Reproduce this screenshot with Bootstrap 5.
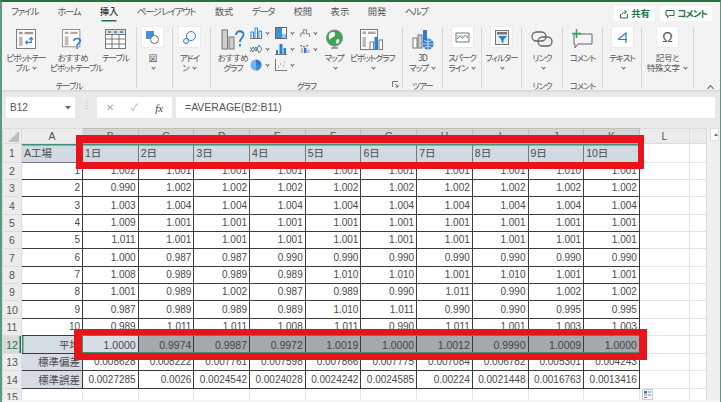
<!DOCTYPE html>
<html lang="ja"><head><meta charset="utf-8">
<link href="https://cdn.jsdelivr.net/npm/bootstrap@5.3.0/dist/css/bootstrap.min.css" rel="stylesheet">
<style>
html,body{margin:0;background:#fff;overflow:hidden}
body{width:721px;height:402px;font-family:"Liberation Sans","Noto Sans CJK JP",sans-serif}
.xl-app{width:721px;height:402px;border-left:2px solid #5d9a7d;border-right:1px solid #5d9a7d;border-top:2px solid #217346;background:#f3f3f3;overflow:hidden;position:relative}
.xl-jp{font-family:"Noto Sans CJK JP",sans-serif;font-feature-settings:"palt";color:#555}
.xl-tabs{height:20px;font-size:9.3px;padding:3px 0 0 9px;gap:18.5px;line-height:13px;flex-wrap:nowrap;position:relative}
.xl-tabs .xl-on{color:#333;font-weight:500;box-shadow:0 3px 0 -1.5px #217346;height:15px}
.xl-kn{letter-spacing:-1.3px;margin-right:1px}
.xl-share{position:absolute;top:4px;height:15px;background:#fff;color:#217346;font-size:9.3px;font-weight:700;line-height:15px;text-align:center}
.xl-s1{left:612px;width:41px}.xl-s2{left:658px;width:52px}
.xl-s2 span{letter-spacing:-1px}
.xl-ribbon{height:68px;background:#f3f3f3}
.xl-grp{margin-top:5px;height:61px;border-right:1.5px solid #d6d6d6;flex:none;position:relative}
.xl-g1{width:135px}.xl-g2{width:36px}.xl-g3{width:38px}.xl-g4{width:192px}.xl-g5{width:40px}.xl-g6{width:39px}.xl-g7{width:40px}.xl-g8{width:41px}.xl-g9{width:40px}.xl-g10{width:39px}.xl-g11{width:52px}
.xl-btn{flex:none;text-align:center;font-size:8.5px;line-height:10px;white-space:nowrap;letter-spacing:-1px}
.xl-kj{letter-spacing:-.3px}
.xl-ico{height:25px;display:flex;justify-content:center;align-items:flex-start}
.xl-ico>svg{margin-top:2px}
.xl-w48{width:48px}.xl-w46{width:46px}.xl-w39{width:39px}.xl-w42{width:42px;margin-left:1px}.xl-w68{width:68px}.xl-w32{width:32px}.xl-w44{width:44px}
.xl-box{width:21px;height:20px;background:#fff;display:flex;align-items:center;justify-content:center;box-shadow:0 0 0 .5px #e4e4e4}
.xl-om{font-family:"Liberation Sans",sans-serif;font-size:14px;line-height:20px;color:#555;letter-spacing:0}
.xl-car{display:inline-block;width:3px;height:3px;border-right:1px solid #666;border-bottom:1px solid #666;transform:rotate(45deg);margin:0 1px 2px 3px}
.xl-title{position:absolute;left:0;right:0;bottom:-2px;text-align:center;font-size:8.5px;line-height:10px;letter-spacing:-1px}
.xl-mini{display:grid;grid-template-columns:25px 25px 18px;grid-auto-rows:16px;margin:-2px 0 0 -4px}
.xl-mini>div{display:flex;align-items:center;gap:1px}
.xl-launch{position:absolute;right:3px;bottom:0}
.xl-up{position:absolute;right:7px;top:84px;width:5px;height:5px;border-left:1px solid #666;border-top:1px solid #666;transform:rotate(45deg)}
.xl-fbar{height:38px;background:#e9e9e9;padding:7px 0 8px 4px;box-shadow:inset 0 3px 3px -2px #cfcfcf}
.xl-name{width:69px;height:21px;background:#fff;font-size:10px;color:#555;padding:0 4px;line-height:21px}
.xl-dots{width:22px;color:#aaa;font-size:9px;line-height:19px;text-align:center}
.xl-fx{width:75px;height:21px;background:#fff;margin-right:4px;color:#aaa;font-size:10px;line-height:20px}
.xl-fxi{font-family:"Liberation Serif",serif;font-style:italic;color:#444;font-size:11px}
.xl-formula{width:539px;height:21px;background:#fff;font-size:10.5px;line-height:21px;color:#555;padding-left:9px}
.xl-area{display:flex;background:#fff;height:272px}
.xl-sheet{width:704px;flex:none;background:#fff;overflow:hidden;position:relative}
.xl-scroll{width:15px;flex:none;background:#f0f0f0;padding:0 2px 0 3px;border-left:1px solid #ddd}
.xl-scroll-b{height:13px;background:#fff;border:1px solid #ddd;position:relative}
.xl-scroll-b::after{content:"";position:absolute;left:3px;top:4px;border:2.5px solid transparent;border-bottom:3px solid #777;border-top:0}
.xl-grid.table{table-layout:fixed;width:704px;border-collapse:collapse;margin:0;font-size:10px;color:#4a4a4a;--bs-table-bg:transparent}
.xl-grid.table>:not(caption)>*>*{padding:0 2px 0 0;height:17px;line-height:16px;border:1px solid #3b3b3b;text-align:right;overflow:hidden;white-space:nowrap;background:#fff;color:#4a4a4a;font-weight:400;box-shadow:none;vertical-align:middle}
.xl-grid.table>:not(caption)>*>*:nth-child(1){width:19px}
.xl-grid.table>:not(caption)>*>*:nth-child(2){width:61px}
.xl-grid.table>:not(caption)>*>*:nth-child(n+3){width:55.7px}
.xl-grid.table>:not(caption)>*>*:nth-child(13){width:50px}
.xl-grid.table>:not(caption)>*>*:nth-child(14){width:16.7px}
.xl-grid.table>:not(caption)>*>.xl-rh{background:#ececec;border:1px solid #dcdcdc;text-align:center;font-size:10.5px;color:#555;padding:0}
.xl-grid.table>:not(caption)>*>.xl-ch{background:#d4d4d4;border:1px solid #bdbdbd;border-bottom:1px solid #aaa;text-align:center;height:15px;line-height:14px;font-size:10.5px;color:#555;padding:0}
.xl-grid.table>:not(caption)>*>.xl-cl{background:#ececec;border-color:#dcdcdc}
.xl-grid.table>:not(caption)>*>.xl-e{border:1px solid #e4e4e4}
.xl-grid.table>:not(caption)>*>.xl-a{border-left-color:#e4e4e4;border-top-color:#bbb}
.xl-grid.table>:not(caption)>*>.xl-hd{background:#d1d9e2;text-align:left;padding-left:2px;border-color:#778;height:19px;line-height:18px;font-size:10.5px}
.xl-hdr-row>.xl-hd{box-shadow:inset 0 1.5px 0 #3f8f73 !important}
.xl-grid.table>:not(caption)>*>.xl-lab{background:#d6dce4;font-family:"Noto Sans CJK JP",sans-serif;font-size:10.5px;letter-spacing:0;border-left-color:#888}
.xl-grid.table>:not(caption)>*>.xl-dk{background:#a5a8ac;color:#444;font-size:10.5px}
.xl-grid.table>:not(caption)>*>.xl-lt{background:#d6dde5;font-size:10.5px}
.xl-grid.table>:not(caption)>*>.xl-sel{background:#d9d9d9;color:#217346;box-shadow:inset -1.5px 0 0 #217346}
.xl-grid.table>:not(caption)>*>.xl-lsel{background:#d6dce4;box-shadow:inset 1.5px 0 0 #3f8f73}
.xl-tall>*{height:18px !important}
.xl-hi{position:absolute;border-style:solid;border-color:#e8141c;pointer-events:none}
.xl-hi1{left:74px;top:7px;width:568px;height:34px;border-width:8px 6px 7px 7px}
.xl-hi2{left:72px;top:201px;width:573px;height:31px;border-width:6px 8px 7px 8px}
.xl-outl{position:absolute;left:80px;top:207px;width:558px;height:18px;border:1px solid #3f8f73;pointer-events:none}
.xl-tri{position:absolute;left:5px;top:2px}
.xl-paste{position:absolute;left:640px;top:261px}
</style></head><body>
<div class="xl-app d-flex flex-column">
 <ul class="nav xl-tabs xl-jp">
  <li class="xl-kn">ファイル</li><li class="xl-kn">ホーム</li><li class="xl-on">挿入</li><li class="xl-kn">ページ レイアウト</li><li>数式</li><li class="xl-kn">データ</li><li>校閲</li><li>表示</li><li>開発</li><li class="xl-kn">ヘルプ</li>
  <li class="xl-share xl-s1">
   <svg width="10" height="10" viewBox="0 0 10 10" fill="none" stroke="#217346"><path d="M1.5 5v4h7V5M3 5.500c.5-2 2-2.500 4-2.500M5.500 1 7.500 3 5.500 5"/></svg> 共有</li>
  <li class="xl-share xl-s2"><svg width="10" height="10" viewBox="0 0 10 10" fill="none" stroke="#217346"><path d="M1 1.500h8v5H4L2.500 8.500v-2H1z"/></svg> <span>コメント</span></li>
 </ul>
 <div class="xl-ribbon d-flex xl-jp">
  <div class="xl-grp xl-g1"><div class="d-flex">
   <div class="xl-btn xl-w48"><div class="xl-ico"><svg width="20" height="20" viewBox="0 0 21 21"><rect x=".5" y=".5" width="20" height="20" fill="#fff" stroke="#777"/><rect x="3" y="3" width="4" height="2.500" fill="#999"/><rect x="9" y="3" width="9" height="2.500" fill="#999"/><rect x="3" y="8" width="4" height="10" fill="#bbb"/><path d="M10 14h6V9M14 11l2-2 2 2M10 14l2-2M10 14l2 2" fill="none" stroke="#2b7cd3" stroke-width="1.200"/></svg></div>ピボットテー<br>ブル <i class="xl-car"></i></div>
   <div class="xl-btn xl-w46"><div class="xl-ico"><svg width="22" height="21" viewBox="0 0 24 23"><rect x=".5" y=".5" width="19" height="19" fill="#fff" stroke="#888"/><rect x="3" y="3" width="4" height="2.500" fill="#aaa"/><rect x="9" y="3" width="8" height="2.500" fill="#aaa"/><rect x="3" y="8" width="4" height="10" fill="#bbb"/><path d="M13 13c0-3.500 7-3.500 7 0 0 2.500-3.500 2.500-3.500 5.500M16.500 20v2" fill="none" stroke="#2b7cd3" stroke-width="1.800"/></svg></div><span class="xl-kj">おすすめ</span><br>ピボットテーブル</div>
   <div class="xl-btn xl-w39"><div class="xl-ico"><svg width="21" height="20" viewBox="0 0 21 20"><rect x=".5" y=".5" width="20" height="19" fill="#fff" stroke="#777"/><rect x=".5" y=".5" width="20" height="5" fill="#ddd" stroke="#777"/><path d="M3 3h3M9 3h3M15 3h3" stroke="#2b7cd3" stroke-width="1.500"/><path d="M7 5.500v14M14 5.500v14M.5 10h20M.5 15h20" stroke="#777"/></svg></div>テーブル</div>
   </div><div class="xl-title">テーブル</div></div>
  <div class="xl-grp xl-g2"><div class="d-flex justify-content-center pe-1"><div class="xl-btn"><div class="xl-ico"><div class="xl-box"><svg width="15" height="15" viewBox="0 0 15 15"><rect x="1" y="1" width="8" height="8" fill="#4a90d9"/><circle cx="9.500" cy="9.500" r="4" fill="#fff" stroke="#666"/></svg></div></div>図<br><i class="xl-car"></i></div></div></div>
  <div class="xl-grp xl-g3"><div class="d-flex justify-content-center pe-1"><div class="xl-btn"><div class="xl-ico"><div class="xl-box"><svg width="15" height="15" viewBox="0 0 15 15" fill="none" stroke="#2b7cd3"><circle cx="9" cy="6" r="4.500"/><circle cx="4" cy="11" r="2.500"/></svg></div></div>アドイ<br>ン <i class="xl-car"></i></div></div></div>
  <div class="xl-grp xl-g4"><div class="d-flex">
   <div class="xl-btn xl-w42"><div class="xl-ico"><svg width="24" height="21" viewBox="0 0 24 21"><rect x="1" y="1" width="5.500" height="19" fill="#cfcfcf" stroke="#777"/><rect x="8" y="8" width="5" height="12" fill="#cfcfcf" stroke="#777"/><path d="M15 6c0-5 7.500-5 7.500 0 0 3-3.500 3-3.500 7M19 15v2.500" fill="none" stroke="#2b7cd3" stroke-width="1.800"/></svg></div><span class="xl-kj">おすすめ</span><br>グラフ</div>
   <div class="xl-w68 xl-mini">
    <div><svg width="12" height="12" viewBox="0 0 12 12"><path d="M1 11V5h2.500v6M5 11V1h2.500v10M9 11V4h2.500v7" fill="#fff" stroke="#2b7cd3"/><path d="M0 11.500h12" stroke="#777"/></svg><i class="xl-car"></i></div>
    <div><svg width="12" height="12" viewBox="0 0 12 12"><rect x=".5" y=".5" width="11" height="11" fill="#fff" stroke="#666"/><rect x="1" y="1" width="6" height="10" fill="#3f8fd8"/><rect x="7" y="7" width="4" height="4" fill="#9cc4e8"/></svg><i class="xl-car"></i></div>
    <div><svg width="13" height="12" viewBox="0 0 13 12" fill="none" stroke="#666"><path d="M1 11V6h3V2h4v5h4v4"/><path d="M5 5v3" stroke="#2b7cd3"/></svg><i class="xl-car"></i></div>
    <div><svg width="12" height="12" viewBox="0 0 12 12" fill="none"><path d="M0 9l3-5 3 4 3-6 3 4" stroke="#2b7cd3"/><path d="M0 4l3 5 3-5 3 6 3-4" stroke="#777"/></svg><i class="xl-car"></i></div>
    <div><svg width="12" height="12" viewBox="0 0 12 12"><path d="M1 11V7h2v4M4.500 11V1h3v10M8.500 11V5h2.500v6" fill="#2b7cd3"/><path d="M0 11.500h12" stroke="#777"/></svg><i class="xl-car"></i></div>
    <div><svg width="13" height="12" viewBox="0 0 13 12"><circle cx="1.500" cy="2" r="1" fill="#444"/><circle cx="5" cy="3" r="1" fill="#444"/><circle cx="9" cy="2" r="1" fill="#444"/><rect x="1" y="5" width="3" height="6" fill="#bbb"/><rect x="5" y="4.500" width="3" height="6.500" fill="#2b7cd3"/><rect x="9" y="7" width="3" height="4" fill="#bbb"/></svg><i class="xl-car"></i></div>
    <div><svg width="12" height="12" viewBox="0 0 12 12"><circle cx="6" cy="6" r="5.500" fill="#7db3e3"/><path d="M6 6V.500a5.500 5.500 0 0 1 5.500 5.500z" fill="#2b7cd3"/><path d="M6 6h5.500A5.500 5.500 0 0 1 6 11.500z" fill="#3f8fd8"/></svg><i class="xl-car"></i></div>
    <div><svg width="12" height="12" viewBox="0 0 12 12"><path d="M.5 0v11.500H12" fill="none" stroke="#777"/><path d="M3 8h1M5 5h1M8 7h1M9 3h1" stroke="#2b7cd3"/></svg><i class="xl-car"></i></div>
   </div>
   <div class="xl-btn xl-w32"><div class="xl-ico"><svg width="19" height="23" viewBox="0 0 19 23"><circle cx="9.500" cy="9" r="8" fill="#3aa655" stroke="#888"/><path d="M5 4c3-2 6-1 5 2s-4 2-5 5c-1-2-2-4 0-7zM12 10c2 0 3 1 2 3s-3 2-3 0z" fill="#fff"/><path d="M6 19h7M9.500 17v2" stroke="#888" stroke-width="1.500"/></svg></div>マップ<br><i class="xl-car"></i></div>
   <div class="xl-btn xl-w44"><div class="xl-ico"><svg width="24" height="21" viewBox="0 0 24 21"><rect x=".5" y=".5" width="17" height="20" fill="#fff" stroke="#777"/><rect x="2.500" y="2.500" width="3.500" height="2.500" fill="#aaa"/><rect x="8" y="2.500" width="7.500" height="2.500" fill="#aaa"/><rect x="2.500" y="8" width="3.500" height="10" fill="#bbb"/><rect x="10" y="13" width="3.500" height="7.500" fill="#fff" stroke="#777"/><rect x="14.500" y="8" width="3.500" height="12.500" fill="#2b7cd3"/><rect x="19" y="11" width="3.500" height="9.500" fill="#fff" stroke="#777"/></svg></div>ピボットグラフ<br><i class="xl-car"></i></div>
   </div><div class="xl-title">グラフ</div>
   <svg class="xl-launch" width="7" height="7" viewBox="0 0 7 7" fill="none" stroke="#777"><path d="M.5 6V.5H6M3 3l3 3M6 3.500V6H3.500"/></svg></div>
  <div class="xl-grp xl-g5"><div class="d-flex justify-content-center"><div class="xl-btn"><div class="xl-ico"><svg width="22" height="22" viewBox="0 0 22 22"><rect x="1" y="9" width="4" height="10" fill="#fff" stroke="#777"/><rect x="6" y="6" width="4" height="13" fill="#ccc" stroke="#777"/><rect x="11" y="1" width="4" height="12" fill="#2b7cd3"/><circle cx="16" cy="15" r="5.500" fill="#2b7cd3"/><path d="M10.500 15h11M16 9.500v11M12 11.500c3 1.500 5 1.500 8 0M12 18.500c3-1.500 5-1.500 8 0" stroke="#fff" stroke-width=".7" fill="none"/></svg></div>3D<br>マップ <i class="xl-car"></i></div></div><div class="xl-title">ツアー</div></div>
  <div class="xl-grp xl-g6"><div class="d-flex justify-content-center"><div class="xl-btn"><div class="xl-ico"><div class="xl-box"><svg width="15" height="13" viewBox="0 0 15 13" fill="none"><path d="M1 2v9M14 2v9M1 2h13M1 11h13" stroke="#777"/><path d="M2 8l3-3 2.500 2 3-3 2.500 3" stroke="#2b7cd3"/><path d="M2 5h11" stroke="#bbb"/></svg></div></div>スパーク<br>ライン <i class="xl-car"></i></div></div></div>
  <div class="xl-grp xl-g7"><div class="d-flex justify-content-center"><div class="xl-btn"><div class="xl-ico"><div class="xl-box"><svg width="14" height="15" viewBox="0 0 14 15"><rect x=".5" y=".5" width="13" height="14" fill="#eee" stroke="#777"/><rect x="2" y="2" width="10" height="2.500" fill="#777"/><path d="M3 6h9L8.500 10v3l-2-1v-2z" fill="#2b7cd3"/></svg></div></div>フィルター<br><i class="xl-car"></i></div></div></div>
  <div class="xl-grp xl-g8"><div class="d-flex justify-content-center"><div class="xl-btn"><div class="xl-ico"><svg width="22" height="20" viewBox="0 0 22 20" fill="none" stroke="#666" stroke-width="1.300"><rect x="1" y="3" width="14" height="9" rx="4.500"/><rect x="7" y="8" width="14" height="9" rx="4.500"/></svg></div>リンク<br><i class="xl-car"></i></div></div><div class="xl-title">リンク</div></div>
  <div class="xl-grp xl-g9"><div class="d-flex justify-content-center"><div class="xl-btn"><div class="xl-ico"><svg width="22" height="20" viewBox="0 0 22 20" fill="none"><path d="M3 5h18v10H7l-3 4v-4H3z" stroke="#666"/><path d="M5.500 0v9M1 4.500h9" stroke="#2fa05a" stroke-width="1.500"/></svg></div>コメント</div></div><div class="xl-title">コメント</div></div>
  <div class="xl-grp xl-g10"><div class="d-flex justify-content-center"><div class="xl-btn"><div class="xl-ico"><div class="xl-box"><svg width="13" height="13" viewBox="0 0 13 13" fill="none" stroke="#2b7cd3" stroke-width="1.200"><path d="M2 8.500 10 2v10M3 8.500h8"/></svg></div></div>テキスト<br><i class="xl-car"></i></div></div></div>
  <div class="xl-grp xl-g11"><div class="d-flex justify-content-center"><div class="xl-btn xl-kj"><div class="xl-ico"><div class="xl-box"><span class="xl-om">Ω</span></div></div>記号と<br>特殊文字 <i class="xl-car"></i></div></div></div>
  <i class="xl-up"></i>
 </div>
 <div class="xl-fbar d-flex">
  <div class="xl-name d-flex justify-content-between align-items-center">B12<svg width="6" height="4" viewBox="0 0 6 4"><path d="M0 0h6L3 3.500z" fill="#666"/></svg></div>
  <div class="xl-dots">⋮</div>
  <div class="xl-fx d-flex justify-content-around align-items-center"><span>✕</span><span>✓</span><span class="xl-fxi">fx</span></div>
  <div class="xl-formula">=AVERAGE(B2:B11)</div>
 </div>
 <div class="xl-area">
  <div class="xl-sheet">
   <table class="table xl-grid" id="t"><tbody id="b"></tbody></table>
   <svg class="xl-tri" width="13" height="13" viewBox="0 0 13 13"><path d="M12 1v11H1z" fill="#bdbdbd"/></svg>
   <div class="xl-outl"></div>
   <div class="xl-hi xl-hi1"></div>
   <div class="xl-hi xl-hi2"></div>
   <svg class="xl-paste" width="11" height="11" viewBox="0 0 11 11"><rect x=".5" y=".5" width="10" height="10" fill="#f4f4f4" stroke="#ccc"/><rect x="2" y="2" width="3" height="2.500" fill="#2b7cd3"/><path d="M6 3h3M2 6h3M6 6h3M2 8.500h3" stroke="#888"/></svg>
  </div>
  <div class="xl-scroll"><div class="xl-scroll-b"></div></div>
 </div>
</div>
<script>
const rows=[
["1","1.002","1.001","1.001","1.001","1.001","1.001","1.001","1.001","1.010","1.001"],
["2","0.990","1.002","1.002","1.002","1.002","1.002","1.002","1.002","1.002","1.002"],
["3","1.003","1.004","1.004","1.004","1.004","1.004","1.004","1.004","1.004","1.004"],
["4","1.009","1.001","1.001","1.001","1.001","1.001","1.001","1.001","1.001","1.001"],
["5","1.011","1.001","1.001","1.001","1.001","1.001","1.001","1.001","1.001","1.001"],
["6","1.000","0.987","0.987","0.990","0.990","0.990","0.990","0.990","0.990","0.990"],
["7","1.008","0.989","0.989","0.989","1.010","1.010","1.001","1.010","1.001","1.001"],
["8","1.001","0.989","1.002","0.987","0.989","0.990","1.011","0.990","1.002","1.002"],
["9","0.987","0.989","0.989","0.989","1.010","1.011","0.990","0.990","0.995","0.995"],
["10","0.989","1.011","1.011","1.008","1.011","0.990","1.011","1.001","1.003","1.003"],
["平均","1.0000","0.9974","0.9987","0.9972","1.0019","1.0000","1.0012","0.9990","1.0009","1.0000"],
["標準偏差","0.008628","0.008222","0.007761","0.007598","0.007866","0.007775","0.007084","0.006782","0.005301","0.004243"],
["標準誤差","0.0027285","0.0026","0.0024542","0.0024028","0.0024242","0.0024585","0.00224","0.0021448","0.0016763","0.0013416"]];
const cols="ABCDEFGHIJK".split("");
let h='<tr><th class="xl-ch xl-cl"></th>'+cols.map((c,i)=>`<th class="xl-ch ${i?'':'xl-cl'}">${c}</th>`).join('')+'<th class="xl-ch xl-cl">L</th><th class="xl-ch xl-cl"></th></tr>';
h+='<tr class="xl-hdr-row"><th class="xl-rh">1</th><td class="xl-hd">A工場</td>'+Array.from({length:10},(_,i)=>`<td class="xl-hd">${i+1}日</td>`).join('')+'<td class="xl-e"></td><td class="xl-e"></td></tr>';
const tall=new Set([3,6,9,11,13]);
rows.forEach((r,i)=>{
 const n=i+2,s=n===12;
 h+=`<tr class="${tall.has(i+1)?'xl-tall':''}"><th class="xl-rh ${s?'xl-sel':''}">${n}</th><td class="${n>=12?'xl-lab':'xl-a'} ${s?'xl-lsel':''}">${r[0]}</td>`;
 r.slice(1).forEach((v,j)=>{h+=`<td class="${s?(j?'xl-dk':'xl-lt'):''}">${v}</td>`});
 h+='<td class="xl-e"></td><td class="xl-e"></td></tr>';
});
h+='<tr><th class="xl-rh">15</th>'+'<td class="xl-e"></td>'.repeat(13)+'</tr>';
document.getElementById('b').innerHTML=h;
</script>
<script src="https://cdn.jsdelivr.net/npm/bootstrap@5.3.0/dist/js/bootstrap.bundle.min.js"></script>
</body></html>
